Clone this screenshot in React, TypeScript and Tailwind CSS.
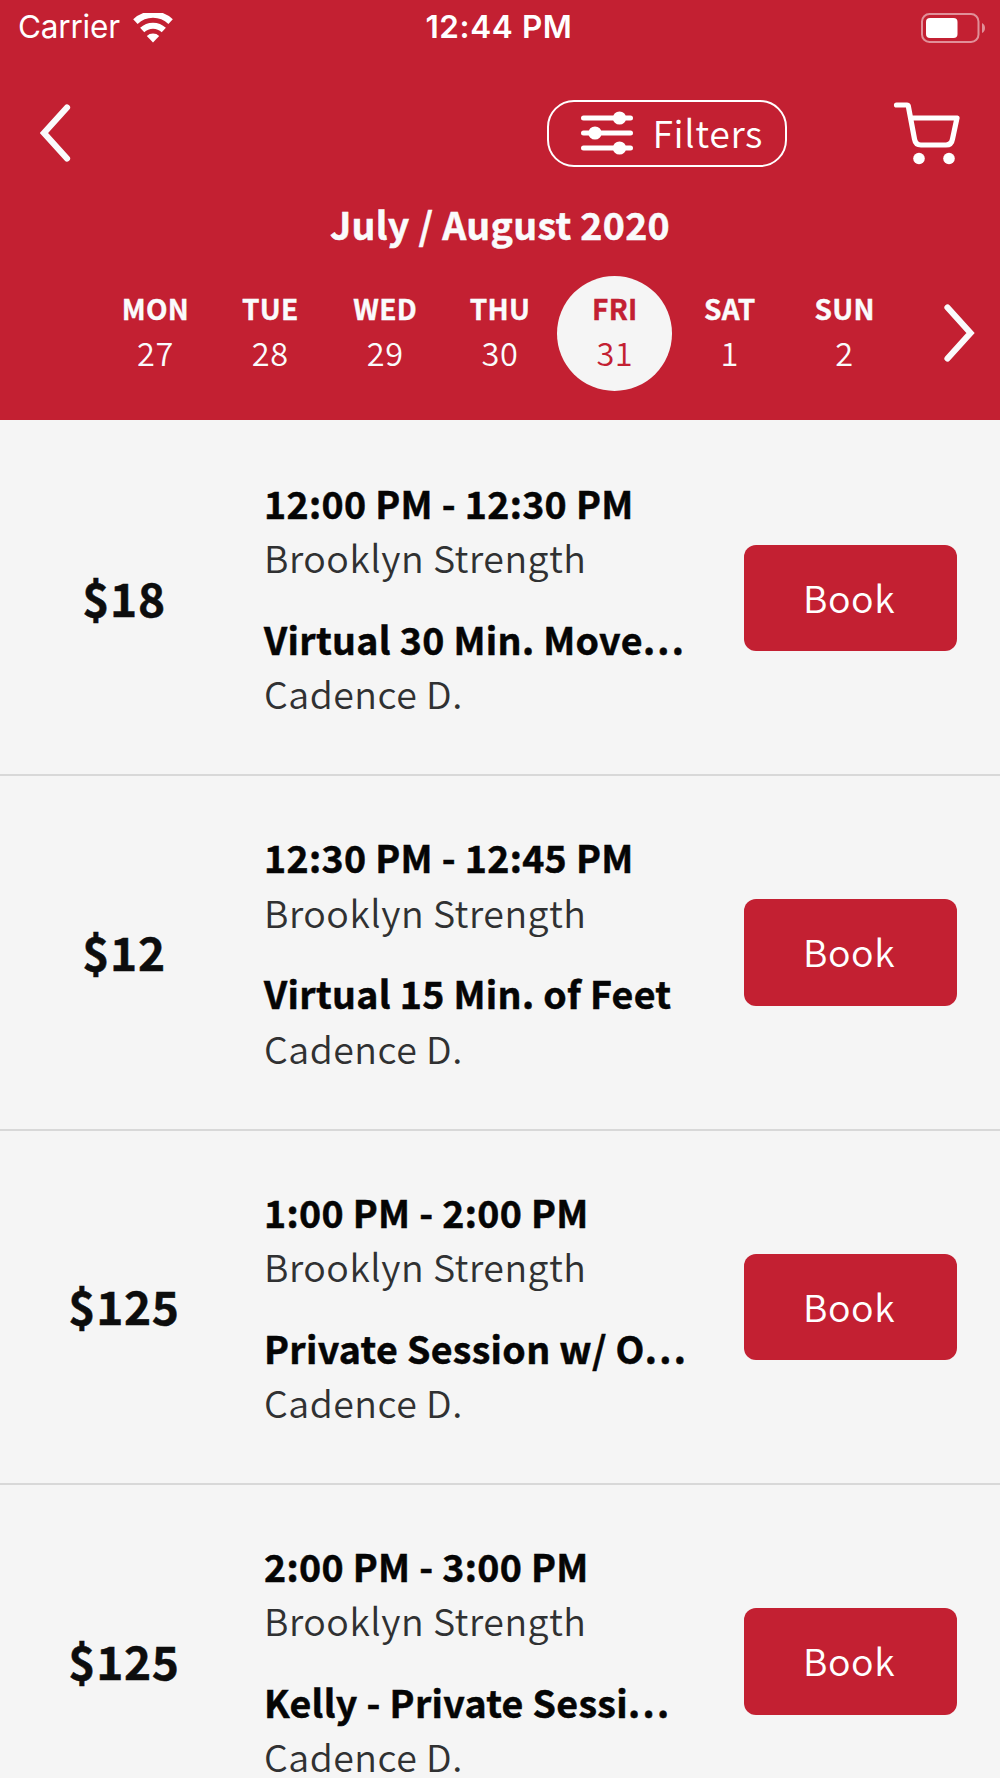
import type { ReactNode } from "react";

const days = [
  { name: "MON", date: 27 },
  { name: "TUE", date: 28 },
  { name: "WED", date: 29 },
  { name: "THU", date: 30 },
  { name: "FRI", date: 31, active: true },
  { name: "SAT", date: 1 },
  { name: "SUN", date: 2 },
];

const classes = [
  { price: "$18", time: "12:00 PM - 12:30 PM", title: "Virtual 30 Min. Move", cut: true },
  { price: "$12", time: "12:30 PM - 12:45 PM", title: "Virtual 15 Min. of Feet" },
  { price: "$125", time: "1:00 PM - 2:00 PM", title: "Private Session w/ O", cut: true },
  { price: "$125", time: "2:00 PM - 3:00 PM", title: "Kelly - Private Sessi", cut: true },
];

function StatusBar() {
  return (
    <div className="grid h-[50px] grid-cols-3 items-center pl-[18px] pr-[15px] font-['Inter',sans-serif] text-[31.5px] leading-[54px] text-white">
      <div className="flex items-center gap-[13px]">
        <span className="tracking-[-0.2px]">Carrier</span>
        <svg width="40" height="30" viewBox="0 0 40 30" fill="none" className="mt-[2px]">
          <path d="M2.4 8.6 A25.5 25.5 0 0 1 37.6 8.6" stroke="white" strokeWidth="6.4" />
          <path d="M9.2 17 A15.6 15.6 0 0 1 30.8 17" stroke="white" strokeWidth="6" />
          <path d="M20 29.5 L13.8 23 A9 9 0 0 1 26.2 23 Z" fill="white" />
        </svg>
      </div>
      <span className="-ml-[5px] text-center font-semibold tracking-[0.6px]">12:44 PM</span>
      <svg width="64" height="30" viewBox="0 0 64 30" fill="none" className="mt-[2px] justify-self-end">
        <rect x="1" y="1" width="56.5" height="28" rx="7.5" stroke="white" strokeOpacity="0.5" strokeWidth="2" />
        <rect x="5" y="5" width="31.5" height="20" rx="4" fill="white" />
        <path d="M61 10 Q64 11.5 64 15 Q64 18.500 61 20 Z" fill="white" fillOpacity="0.5" />
      </svg>
    </div>
  );
}

function Chevron({ d }: { d: string }) {
  return (
    <svg width="32" height="60" viewBox="0 0 32 60" fill="none">
      <path d={d} stroke="#fafbfc" strokeWidth="6.2" strokeLinecap="round" />
    </svg>
  );
}

function FilterIcon() {
  return (
    <svg width="54" height="46" viewBox="0 0 54 46">
      <path d="M3.500 8H50.500M3.500 23H50.500M3.500 38H50.500" stroke="white" strokeWidth="5" strokeLinecap="round" />
      <circle cx="39.500" cy="8" r="6.600" fill="white" />
      <circle cx="15" cy="23" r="6.600" fill="white" />
      <circle cx="39.500" cy="38" r="6.600" fill="white" />
    </svg>
  );
}

function CartIcon() {
  return (
    <svg width="68" height="66" viewBox="0 0 68 66" fill="none">
      <path
        d="M4.500 6H15Q16 6 16.300 7L22.500 40Q23.500 46 29 46H54Q59.500 46 60.500 40L65 19H19"
        stroke="white"
        strokeWidth="5.2"
        strokeLinecap="round"
        strokeLinejoin="round"
      />
      <circle cx="27" cy="59.500" r="5.800" fill="white" />
      <circle cx="57" cy="59.500" r="5.800" fill="white" />
    </svg>
  );
}

function Day({ name, date, active }: { name: string; date: number; active?: boolean }) {
  return (
    <div
      className={`flex h-[115px] w-[114.86px] flex-col items-center rounded-full pt-[11px] ${
        active ? "bg-[#f5f5f5] text-[#c32032]" : "text-[#fafbfc]"
      }`}
    >
      <span className="text-[28px] font-bold leading-[42px] tracking-[0.3px] [-webkit-text-stroke:0.4px]">{name}</span>
      <span className="text-[32.5px] font-[350] leading-[46px] tracking-[0.6px]">{date}</span>
    </div>
  );
}

function Row({ price, time, title, cut }: { price: string; time: string; title: string; cut?: boolean }) {
  return (
    <div className="flex h-[354.400px] items-center border-b-2 border-[#d8d8d8] pr-[43px]">
      <div className="mt-[-2px] w-[248px] text-center text-[46px] font-bold tracking-[0.7px] text-[#0d0d0d] [-webkit-text-stroke:0.5px]">
        {price}
      </div>
      <div className="flex-1 whitespace-nowrap text-[37.500px] leading-[54.400px] text-[#303132]">
        <p className="ml-4 font-bold tracking-[0.33px] text-[#050505] [-webkit-text-stroke:0.5px]">{time}</p>
        <p className="ml-4 font-[350] tracking-[0.5px]">Brooklyn Strength</p>
        <p className="ml-4 mt-[27.200px] font-bold tracking-[0.33px] text-[#050505] [-webkit-text-stroke:0.5px]">
          {title}
          {cut && <span className="tracking-[2.3px]">...</span>}
        </p>
        <p className="ml-4 font-[350] tracking-[0.5px]">Cadence D.</p>
      </div>
      <Button>Book</Button>
    </div>
  );
}

function Button({ children }: { children: ReactNode }) {
  return (
    <button className="h-[106.500px] w-[213px] rounded-xl bg-[#c32032] pb-[2px] pr-[3px] text-[37.500px] font-[350] tracking-[0.5px] text-white">
      {children}
    </button>
  );
}

export default function App() {
  return (
    <div className="h-[1778px] w-[1000px] overflow-hidden bg-[#f5f5f5] font-['Noto_Sans_CJK_SC',sans-serif]">
      <header className="h-[420px] bg-[#c32032]">
        <StatusBar />
        <div className="mt-[49.500px] flex h-[67px] items-center pl-10 pr-[40px]">
          <Chevron d="M27 4.500L4 30L27 55.500" />
          <button className="ml-auto flex h-[67px] w-[240px] items-center rounded-[27px] border-2 border-white pb-px pl-[31px] text-[37.500px] font-[350] tracking-[0.6px] text-white">
            <FilterIcon />
            <span className="ml-[19px]">Filters</span>
          </button>
          <div className="-mt-[2px] ml-[105.500px]">
            <CartIcon />
          </div>
        </div>
        <h1 className="mt-[30.500px] text-center text-[37.500px] font-bold leading-[54px] tracking-[0.3px] text-[#fafbfc] [-webkit-text-stroke:0.5px]">
          July / August 2020
        </h1>
        <div className="mt-[25px] flex items-center pl-[98px] pr-[25px]">
          {days.map((day) => (
            <Day key={day.name} {...day} />
          ))}
          <div className="-mt-px ml-auto">
            <Chevron d="M4.500 4.500L27.500 30L4.500 55.500" />
          </div>
        </div>
      </header>
      <main className="pt-[2px]">
        {classes.map((item) => (
          <Row key={item.time} {...item} />
        ))}
      </main>
    </div>
  );
}
